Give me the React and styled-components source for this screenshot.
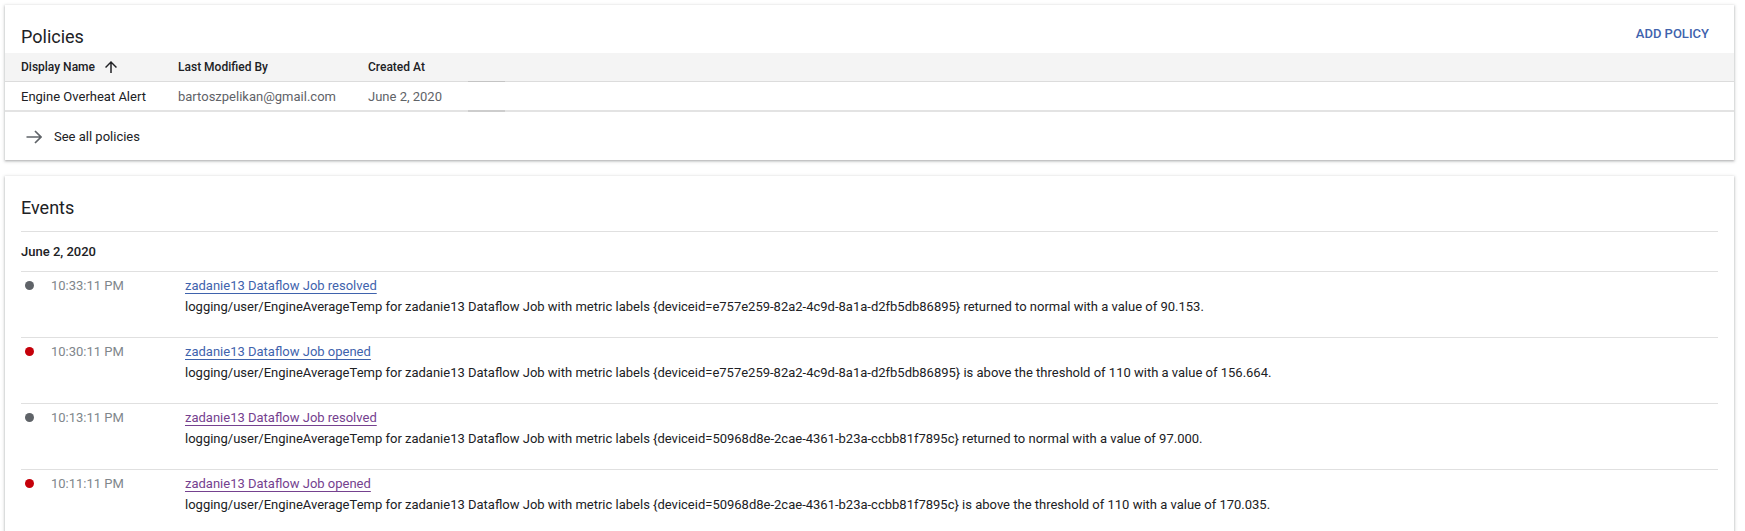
import styled, { createGlobalStyle } from "styled-components";

const GlobalStyle = createGlobalStyle`
    * {
        box-sizing: border-box;
    }

    body {
        margin: 0;
        background: #fff;
        font-family: Roboto, "Noto Sans", Arial, sans-serif;
        color: #202124;
    }
`;

const StyledPage = styled.div`
    display: flex;
    flex-direction: column;
    gap: 16px;
    padding: 5px 11px 0 5px;
`;

const StyledCard = styled.section`
    background: #fff;
    box-shadow: 0 1px 2px 0 rgba(60, 64, 67, 0.3), 0 1px 3px 1px rgba(60, 64, 67, 0.15);
`;

const StyledCardHeader = styled.div`
    display: flex;
    align-items: flex-start;
    justify-content: space-between;
    height: 48px;
    padding: 20px 25px 0 16px;
`;

const StyledTitle = styled.h2`
    margin: 0;
    font-size: 18px;
    font-weight: 400;
    line-height: 24px;
    color: #202124;
`;

const StyledTextButton = styled.button`
    background: none;
    border: none;
    padding: 0;
    margin-top: 1px;
    font-family: inherit;
    font-size: 13px;
    font-weight: 500;
    line-height: 16px;
    color: #3f63ad;
    text-transform: uppercase;
    cursor: pointer;
`;

const StyledRow = styled.div`
    display: grid;
    grid-template-columns: 173px 190px 100px 37px 1fr;
    height: ${props => props.$height}px;
    background: ${props => props.$head ? "#f4f4f4" : "#fff"};
    border-bottom: ${props => props.$head ? "1px solid #dcdcdc" : "2px solid #e3e3e3"};
    font-size: ${props => props.$head ? "12px" : "13px"};
    font-weight: ${props => props.$head ? 500 : 400};
`;

const StyledCell = styled.div`
    display: flex;
    align-items: center;
    padding-left: ${props => props.$first ? "16px" : "0"};
    color: ${props => props.$muted ? "#5f6368" : "#202124"};
    white-space: nowrap;
`;

const StyledMarkCell = styled.div`
    border-top: ${props => props.$mark ? "1px solid #c4c4c4" : "none"};
    margin-top: -1px;
    margin-bottom: -2px;
    border-bottom: ${props => props.$mark ? "2px solid #cdcdcd" : "none"};
`;

const StyledSortIcon = styled.svg`
    width: 18px;
    height: 18px;
    margin-left: 7px;
    fill: #202124;
`;

const StyledFooterLink = styled.a`
    display: flex;
    align-items: center;
    gap: 12px;
    height: 48px;
    padding: 1px 0 0 21px;
    font-size: 13px;
    color: #202124;
    text-decoration: none;
    cursor: pointer;

    svg {
        width: 16px;
        height: 16px;
        stroke: #5f6368;
    }
`;

const StyledEventsHeader = styled.div`
    padding: 20px 16px 0;
`;

const StyledList = styled.div`
    padding: 0 16px;
    margin-top: 11px;
`;

const StyledDay = styled.div`
    border-top: 1px solid #e0e0e0;
    padding: 10px 0 9px;
    font-size: 13px;
    font-weight: 500;
    line-height: 20px;
    color: #202124;
`;

const StyledEvent = styled.div`
    display: grid;
    grid-template-columns: 30px 134px 1fr;
    border-top: 1px solid #e0e0e0;
    padding: 4px 0 20px;
    font-size: 13px;
    line-height: 20px;
`;

const StyledDot = styled.span`
    display: block;
    width: 9px;
    height: 9px;
    margin: 5px 0 0 4px;
    border-radius: 50%;
    background: ${props => props.$open ? "#c5000a" : "#5f6368"};
`;

const StyledTime = styled.span`
    color: #80868b;
`;

const StyledEventLink = styled.a`
    color: ${props => props.$visited ? "#75418f" : "#3f63ad"};
    text-decoration: underline;
    text-underline-offset: 3px;
    text-decoration-thickness: 1px;
    cursor: pointer;
`;

const StyledDescription = styled.div`
    padding-top: 1px;
    color: #202124;
    white-space: nowrap;
`;

const events = [
    {
        time: "10:33:11 PM",
        title: "zadanie13 Dataflow Job resolved",
        open: false,
        visited: false,
        text: "logging/user/EngineAverageTemp for zadanie13 Dataflow Job with metric labels {deviceid=e757e259-82a2-4c9d-8a1a-d2fb5db86895} returned to normal with a value of 90.153.",
    },
    {
        time: "10:30:11 PM",
        title: "zadanie13 Dataflow Job opened",
        open: true,
        visited: false,
        text: "logging/user/EngineAverageTemp for zadanie13 Dataflow Job with metric labels {deviceid=e757e259-82a2-4c9d-8a1a-d2fb5db86895} is above the threshold of 110 with a value of 156.664.",
    },
    {
        time: "10:13:11 PM",
        title: "zadanie13 Dataflow Job resolved",
        open: false,
        visited: true,
        text: "logging/user/EngineAverageTemp for zadanie13 Dataflow Job with metric labels {deviceid=50968d8e-2cae-4361-b23a-ccbb81f7895c} returned to normal with a value of 97.000.",
    },
    {
        time: "10:11:11 PM",
        title: "zadanie13 Dataflow Job opened",
        open: true,
        visited: true,
        text: "logging/user/EngineAverageTemp for zadanie13 Dataflow Job with metric labels {deviceid=50968d8e-2cae-4361-b23a-ccbb81f7895c} is above the threshold of 110 with a value of 170.035.",
    },
];

function App() {
    return (
        <>
            <GlobalStyle />
            <StyledPage>
                <StyledCard>
                    <StyledCardHeader>
                        <StyledTitle>Policies</StyledTitle>
                        <StyledTextButton>Add policy</StyledTextButton>
                    </StyledCardHeader>

                    <StyledRow $head $height={29}>
                        <StyledCell $first>
                            Display Name
                            <StyledSortIcon viewBox="0 0 24 24">
                                <path d="M4 12l1.41 1.41L11 7.83V20h2V7.83l5.58 5.59L20 12l-8-8-8 8z" />
                            </StyledSortIcon>
                        </StyledCell>
                        <StyledCell>Last Modified By</StyledCell>
                        <StyledCell>Created At</StyledCell>
                        <StyledMarkCell />
                        <StyledMarkCell />
                    </StyledRow>

                    <StyledRow $height={30}>
                        <StyledCell $first>Engine Overheat Alert</StyledCell>
                        <StyledCell $muted>bartoszpelikan@gmail.com</StyledCell>
                        <StyledCell $muted>June 2, 2020</StyledCell>
                        <StyledMarkCell $mark />
                        <StyledMarkCell />
                    </StyledRow>

                    <StyledFooterLink>
                        <svg viewBox="0 0 16 16" fill="none" strokeWidth="1.7">
                            <path d="M0.5 8H15M9 2l6 6-6 6" />
                        </svg>
                        See all policies
                    </StyledFooterLink>
                </StyledCard>

                <StyledCard>
                    <StyledEventsHeader>
                        <StyledTitle>Events</StyledTitle>
                    </StyledEventsHeader>

                    <StyledList>
                        <StyledDay>June 2, 2020</StyledDay>
                        {events.map((event) => (
                            <StyledEvent key={event.time}>
                                <div>
                                    <StyledDot $open={event.open} />
                                </div>
                                <StyledTime>{event.time}</StyledTime>
                                <div>
                                    <StyledEventLink $visited={event.visited}>
                                        {event.title}
                                    </StyledEventLink>
                                    <StyledDescription>{event.text}</StyledDescription>
                                </div>
                            </StyledEvent>
                        ))}
                    </StyledList>
                </StyledCard>
            </StyledPage>
        </>
    );
}

export default App;
